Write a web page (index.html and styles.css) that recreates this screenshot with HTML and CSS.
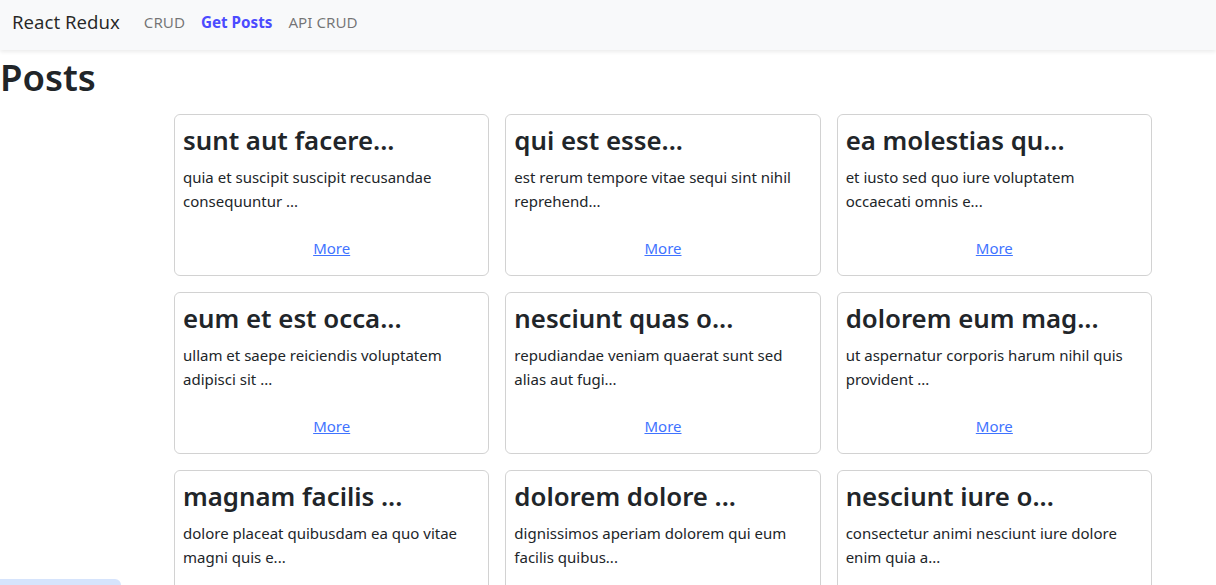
FILE: index.html
```html
<!DOCTYPE html>
<html lang="en">
<head>
<meta charset="utf-8">
<title>React Redux</title>
<link rel="stylesheet" href="styles.css">
</head>
<body>
<nav class="navbar">
  <a class="brand" href="#">React Redux</a>
  <ul class="nav-links">
    <li><a class="nav-link" href="#">CRUD</a></li>
    <li><a class="nav-link active" href="#">Get Posts</a></li>
    <li><a class="nav-link" href="#">API CRUD</a></li>
  </ul>
</nav>
<h1 class="page-title">Posts</h1>
<div class="posts">
  <div class="card"><h3 class="card-title">sunt aut facere...</h3><p class="card-text">quia et suscipit suscipit recusandae consequuntur ...</p><a class="more" href="#">More</a></div>
  <div class="card"><h3 class="card-title">qui est esse...</h3><p class="card-text">est rerum tempore vitae sequi sint nihil reprehend...</p><a class="more" href="#">More</a></div>
  <div class="card"><h3 class="card-title">ea molestias qu...</h3><p class="card-text">et iusto sed quo iure voluptatem occaecati omnis e...</p><a class="more" href="#">More</a></div>
  <div class="card"><h3 class="card-title">eum et est occa...</h3><p class="card-text">ullam et saepe reiciendis voluptatem adipisci sit ...</p><a class="more" href="#">More</a></div>
  <div class="card"><h3 class="card-title">nesciunt quas o...</h3><p class="card-text">repudiandae veniam quaerat sunt sed alias aut fugi...</p><a class="more" href="#">More</a></div>
  <div class="card"><h3 class="card-title">dolorem eum mag...</h3><p class="card-text">ut aspernatur corporis harum nihil quis provident ...</p><a class="more" href="#">More</a></div>
  <div class="card"><h3 class="card-title">magnam facilis ...</h3><p class="card-text">dolore placeat quibusdam ea quo vitae magni quis e...</p><a class="more" href="#">More</a></div>
  <div class="card"><h3 class="card-title">dolorem dolore ...</h3><p class="card-text">dignissimos aperiam dolorem qui eum facilis quibus...</p><a class="more" href="#">More</a></div>
  <div class="card"><h3 class="card-title">nesciunt iure o...</h3><p class="card-text">consectetur animi nesciunt iure dolore enim quia a...</p><a class="more" href="#">More</a></div>
</div>
<div class="floating-tab"></div>
</body>
</html>
```
FILE: styles.css
```css
* { box-sizing: border-box; }
html, body { margin: 0; padding: 0; }
body {
  font-family: "Noto Sans", "Open Sans", sans-serif;
  font-size: 16px;
  line-height: 1.5;
  color: #212529;
  background: #fff;
}
.navbar {
  display: flex;
  align-items: center;
  height: 50px;
  padding: 0 12px 6px;
  background: #f8f9fa;
  box-shadow: 0 2px 4px rgba(0,0,0,0.08);
}
.brand {
  font-size: 18.6px;
  color: rgba(0,0,0,0.85);
  text-decoration: none;
  margin-right: 16px;
  line-height: 30px;
}
.nav-links {
  display: flex;
  list-style: none;
  margin: 0;
  padding: 0;
}
.nav-link {
  display: block;
  padding: 8px 8px;
  font-size: 15.2px;
  color: rgba(0,0,0,0.55);
  text-decoration: none;
}
.nav-link.active {
  color: #4b4bff;
  font-weight: 700;
}
.page-title {
  margin: 0 0 12px;
  font-size: 36.5px;
  font-weight: 600;
  line-height: 50px;
  padding-top: 2px;
}
.posts {
  margin-left: 174px;
  width: 978px;
  display: grid;
  grid-template-columns: repeat(3, 1fr);
  gap: 16px;
}
.card {
  border: 1px solid rgba(0,0,0,0.175);
  border-radius: 6px;
  padding: 8px;
  display: flex;
  flex-direction: column;
  align-items: stretch;
}
.card-title {
  margin: 0 0 8px;
  font-size: 25.8px;
  font-weight: 600;
  line-height: 34px;
}
.card-text {
  margin: 0 0 16px;
  font-size: 15px;
  line-height: 24px;
}
.more {
  align-self: center;
  padding: 7px 12px;
  line-height: 24px;
  color: #3f73ff;
  text-decoration: underline;
  font-size: 15px;
}
.floating-tab {
  position: fixed;
  left: 0;
  bottom: -10px;
  width: 121px;
  height: 16px;
  background: #d6e4fc;
  border-radius: 0 6px 0 0;
}
```
